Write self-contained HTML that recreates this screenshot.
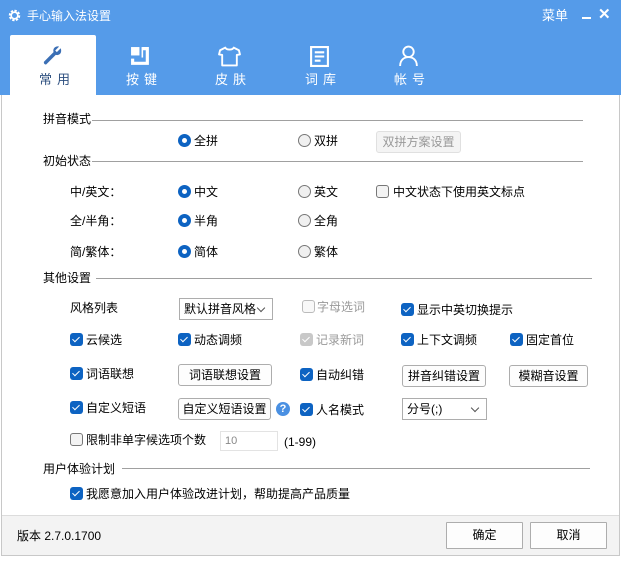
<!DOCTYPE html>
<html><head><meta charset="utf-8"><style>
*{margin:0;padding:0;box-sizing:border-box}
body{width:621px;height:563px;background:#fff;font-family:"Liberation Sans","Noto Sans CJK SC",sans-serif;font-size:12px;color:#000;position:relative;overflow:hidden}
.a{position:absolute;white-space:nowrap;line-height:16px}
#win{position:absolute;left:1px;top:0;width:619px;height:556px;border:1px solid #c8c8c8;border-top:none;background:#fff}
#top{position:absolute;left:0;top:0;width:621px;height:95px;background:#559be9}
.tabl{color:#fff;font-size:13px;letter-spacing:5px}
.ln{position:absolute;height:1px;background:#a0a0a0}
.cb{position:absolute;width:13px;height:13px;border-radius:3px;background:#0d63c2}
.cb::after{content:"";position:absolute;left:4px;top:2px;width:3px;height:6px;border:solid #fff;border-width:0 1.5px 1.5px 0;transform:rotate(45deg)}
.cb.off{background:#f3f3f3;border:1px solid #777}
.cb.off::after{display:none}
.cb.dis{background:#c8c8c8}
.cb.dise{background:#f8f8f8;border:1px solid #bbb}.cb.dise::after{display:none}
.rd{position:absolute;width:13px;height:13px;border-radius:50%;background:#0d63c2}
.rd::after{content:"";position:absolute;left:4px;top:4px;width:5px;height:5px;border-radius:50%;background:#fff}
.rd.off{background:#f0f0f0;border:1px solid #777}.rd.off::after{display:none}
.bt{position:absolute;border:1px solid #adadad;border-radius:3px;background:#fdfdfd;text-align:center;font-size:12px}
.sel{position:absolute;border:1px solid #adadad;background:#fff;font-size:12px;padding-left:4px}
.sel::after{content:"";position:absolute;right:8px;top:6px;width:5px;height:5px;border:solid #555;border-width:0 1px 1px 0;transform:rotate(45deg)}
.g{color:#999}
</style></head><body>
<div id="win"></div>
<div id="top">
<svg style="position:absolute;left:8px;top:9px" width="13" height="13" viewBox="0 0 13 13"><circle cx="6.5" cy="6.5" r="4.5" fill="none" stroke="#fff" stroke-width="2.5" stroke-dasharray="2.2 1.3"/><circle cx="6.5" cy="6.5" r="3.3" fill="none" stroke="#fff" stroke-width="1.6"/></svg>
<div class="a" style="left:27px;top:8px;color:#fff;font-size:12px">手心输入法设置</div>
<div class="a" style="left:542px;top:8px;color:#fff;font-size:13px">菜单</div>
<div style="position:absolute;left:582px;top:17px;width:9px;height:2px;background:#fff"></div>
<div class="a" style="left:598px;top:7px;color:#fff;font-size:15px;font-weight:bold">✕</div>
<div style="position:absolute;left:10px;top:35px;width:86px;height:60px;background:#fff;border-radius:2px 2px 0 0"></div>
<svg style="position:absolute;left:42px;top:45px" width="22" height="22" viewBox="0 0 20 20"><path d="M17 3 L13.5 6.5 L12 5 L15.5 1.5 C12.5 0.5 9.5 3 10.5 6.5 L2 15 C1 16 2.5 18.5 4 17.5 L12.5 9 C16 10 18.5 7 17 3Z" fill="#3b6fb5"/></svg>
<div class="a tabl" style="left:39px;top:72px;color:#2d4f7f">常用</div>
<svg style="position:absolute;left:130px;top:46px" width="21" height="21" viewBox="0 0 20 20"><rect x="1" y="1" width="8" height="8" fill="#fff"/><path d="M12 1 H18 V18 H1 V12 H4 V15 H15 V4 H12Z" fill="#fff"/><rect x="11" y="1" width="1.5" height="10" fill="#fff"/></svg>
<div class="a tabl" style="left:126px;top:72px">按键</div>
<svg style="position:absolute;left:218px;top:46px" width="23" height="21" viewBox="0 0 22 20"><path d="M7 1.5 L2 4 L1 8 L4 8.5 V18.5 H18 V8.5 L21 8 L20 4 L15 1.5 C14 4 8 4 7 1.5Z" fill="none" stroke="#fff" stroke-width="1.8" stroke-linejoin="round"/></svg>
<div class="a tabl" style="left:215px;top:72px">皮肤</div>
<svg style="position:absolute;left:310px;top:46px" width="19" height="21" viewBox="0 0 18 20"><rect x="1" y="1" width="16" height="18" fill="none" stroke="#fff" stroke-width="2"/><path d="M4.5 6H13.5M4.5 10H13.5M4.5 14H10" stroke="#fff" stroke-width="2"/></svg>
<div class="a tabl" style="left:305px;top:72px">词库</div>
<svg style="position:absolute;left:398px;top:45px" width="21" height="22" viewBox="0 0 20 21"><circle cx="10" cy="6.5" r="5" fill="none" stroke="#fff" stroke-width="1.8"/><path d="M2 20 C2 14 6 11.5 10 11.5 C14 11.5 18 14 18 20" fill="none" stroke="#fff" stroke-width="1.8"/></svg>
<div class="a tabl" style="left:394px;top:72px">帐号</div>
</div>

<div class="a" style="left:43px;top:111px">拼音模式</div><div class="ln" style="left:92px;top:120px;width:491px"></div>
<div class="rd" style="left:178px;top:134px"></div><div class="a" style="left:194px;top:133px">全拼</div>
<div class="rd off" style="left:298px;top:134px"></div><div class="a" style="left:314px;top:133px">双拼</div>
<div class="bt g" style="left:376px;top:131px;width:85px;height:22px;line-height:20px;background:#f4f4f4;border-color:#e0e0e0">双拼方案设置</div>

<div class="a" style="left:43px;top:153px">初始状态</div><div class="ln" style="left:92px;top:161px;width:491px"></div>
<div class="a" style="left:70px;top:184px">中/英文：</div>
<div class="rd" style="left:178px;top:185px"></div><div class="a" style="left:194px;top:184px">中文</div>
<div class="rd off" style="left:298px;top:185px"></div><div class="a" style="left:314px;top:184px">英文</div>
<div class="cb off" style="left:376px;top:185px"></div><div class="a" style="left:393px;top:184px">中文状态下使用英文标点</div>
<div class="a" style="left:70px;top:213px">全/半角：</div>
<div class="rd" style="left:178px;top:214px"></div><div class="a" style="left:194px;top:213px">半角</div>
<div class="rd off" style="left:298px;top:214px"></div><div class="a" style="left:314px;top:213px">全角</div>
<div class="a" style="left:70px;top:244px">简/繁体：</div>
<div class="rd" style="left:178px;top:245px"></div><div class="a" style="left:194px;top:244px">简体</div>
<div class="rd off" style="left:298px;top:245px"></div><div class="a" style="left:314px;top:244px">繁体</div>

<div class="a" style="left:43px;top:270px">其他设置</div><div class="ln" style="left:96px;top:278px;width:496px"></div>
<div class="a" style="left:70px;top:300px">风格列表</div>
<div class="sel" style="left:179px;top:298px;width:94px;height:22px;line-height:20px">默认拼音风格</div>
<div class="cb dise" style="left:302px;top:300px"></div><div class="a g" style="left:317px;top:299px">字母选词</div>
<div class="cb" style="left:401px;top:303px"></div><div class="a" style="left:417px;top:302px">显示中英切换提示</div>

<div class="cb" style="left:70px;top:333px"></div><div class="a" style="left:86px;top:332px">云候选</div>
<div class="cb" style="left:178px;top:333px"></div><div class="a" style="left:194px;top:332px">动态调频</div>
<div class="cb dis" style="left:300px;top:333px"></div><div class="a g" style="left:316px;top:332px">记录新词</div>
<div class="cb" style="left:401px;top:333px"></div><div class="a" style="left:417px;top:332px">上下文调频</div>
<div class="cb" style="left:510px;top:333px"></div><div class="a" style="left:526px;top:332px">固定首位</div>

<div class="cb" style="left:70px;top:367px"></div><div class="a" style="left:86px;top:366px">词语联想</div>
<div class="bt" style="left:178px;top:364px;width:94px;height:22px;line-height:20px">词语联想设置</div>
<div class="cb" style="left:300px;top:368px"></div><div class="a" style="left:316px;top:367px">自动纠错</div>
<div class="bt" style="left:402px;top:365px;width:84px;height:22px;line-height:20px">拼音纠错设置</div>
<div class="bt" style="left:509px;top:365px;width:79px;height:22px;line-height:20px">模糊音设置</div>

<div class="cb" style="left:70px;top:401px"></div><div class="a" style="left:86px;top:400px">自定义短语</div>
<div class="bt" style="left:178px;top:398px;width:93px;height:22px;line-height:20px">自定义短语设置</div>
<div style="position:absolute;left:276px;top:402px;width:14px;height:14px;border-radius:50%;background:#4a90e2;color:#fff;font-size:11px;font-weight:bold;text-align:center;line-height:14px">?</div>
<div class="cb" style="left:300px;top:403px"></div><div class="a" style="left:316px;top:402px">人名模式</div>
<div class="sel" style="left:402px;top:398px;width:85px;height:22px;line-height:20px">分号(;)</div>

<div class="cb off" style="left:70px;top:433px"></div><div class="a" style="left:86px;top:432px">限制非单字候选项个数</div>
<div style="position:absolute;left:220px;top:431px;width:58px;height:20px;border:1px solid #e3e3e3;font-size:11px;color:#888;padding-left:4px;line-height:18px">10</div>
<div class="a" style="left:284px;top:434px;font-size:12px">(1-99)</div>

<div class="a" style="left:43px;top:461px">用户体验计划</div><div class="ln" style="left:122px;top:468px;width:468px"></div>
<div class="cb" style="left:70px;top:487px"></div><div class="a" style="left:86px;top:486px">我愿意加入用户体验改进计划，帮助提高产品质量</div>

<div style="position:absolute;left:2px;top:515px;width:617px;height:40px;background:#f3f3f3;border-top:1px solid #dcdcdc"></div>
<div class="a" style="left:17px;top:528px;font-size:12px">版本 2.7.0.1700</div>
<div class="bt" style="left:446px;top:522px;width:77px;height:27px;line-height:25px;border-radius:1px">确定</div>
<div class="bt" style="left:530px;top:522px;width:77px;height:27px;line-height:25px;border-radius:1px">取消</div>
</body></html>
